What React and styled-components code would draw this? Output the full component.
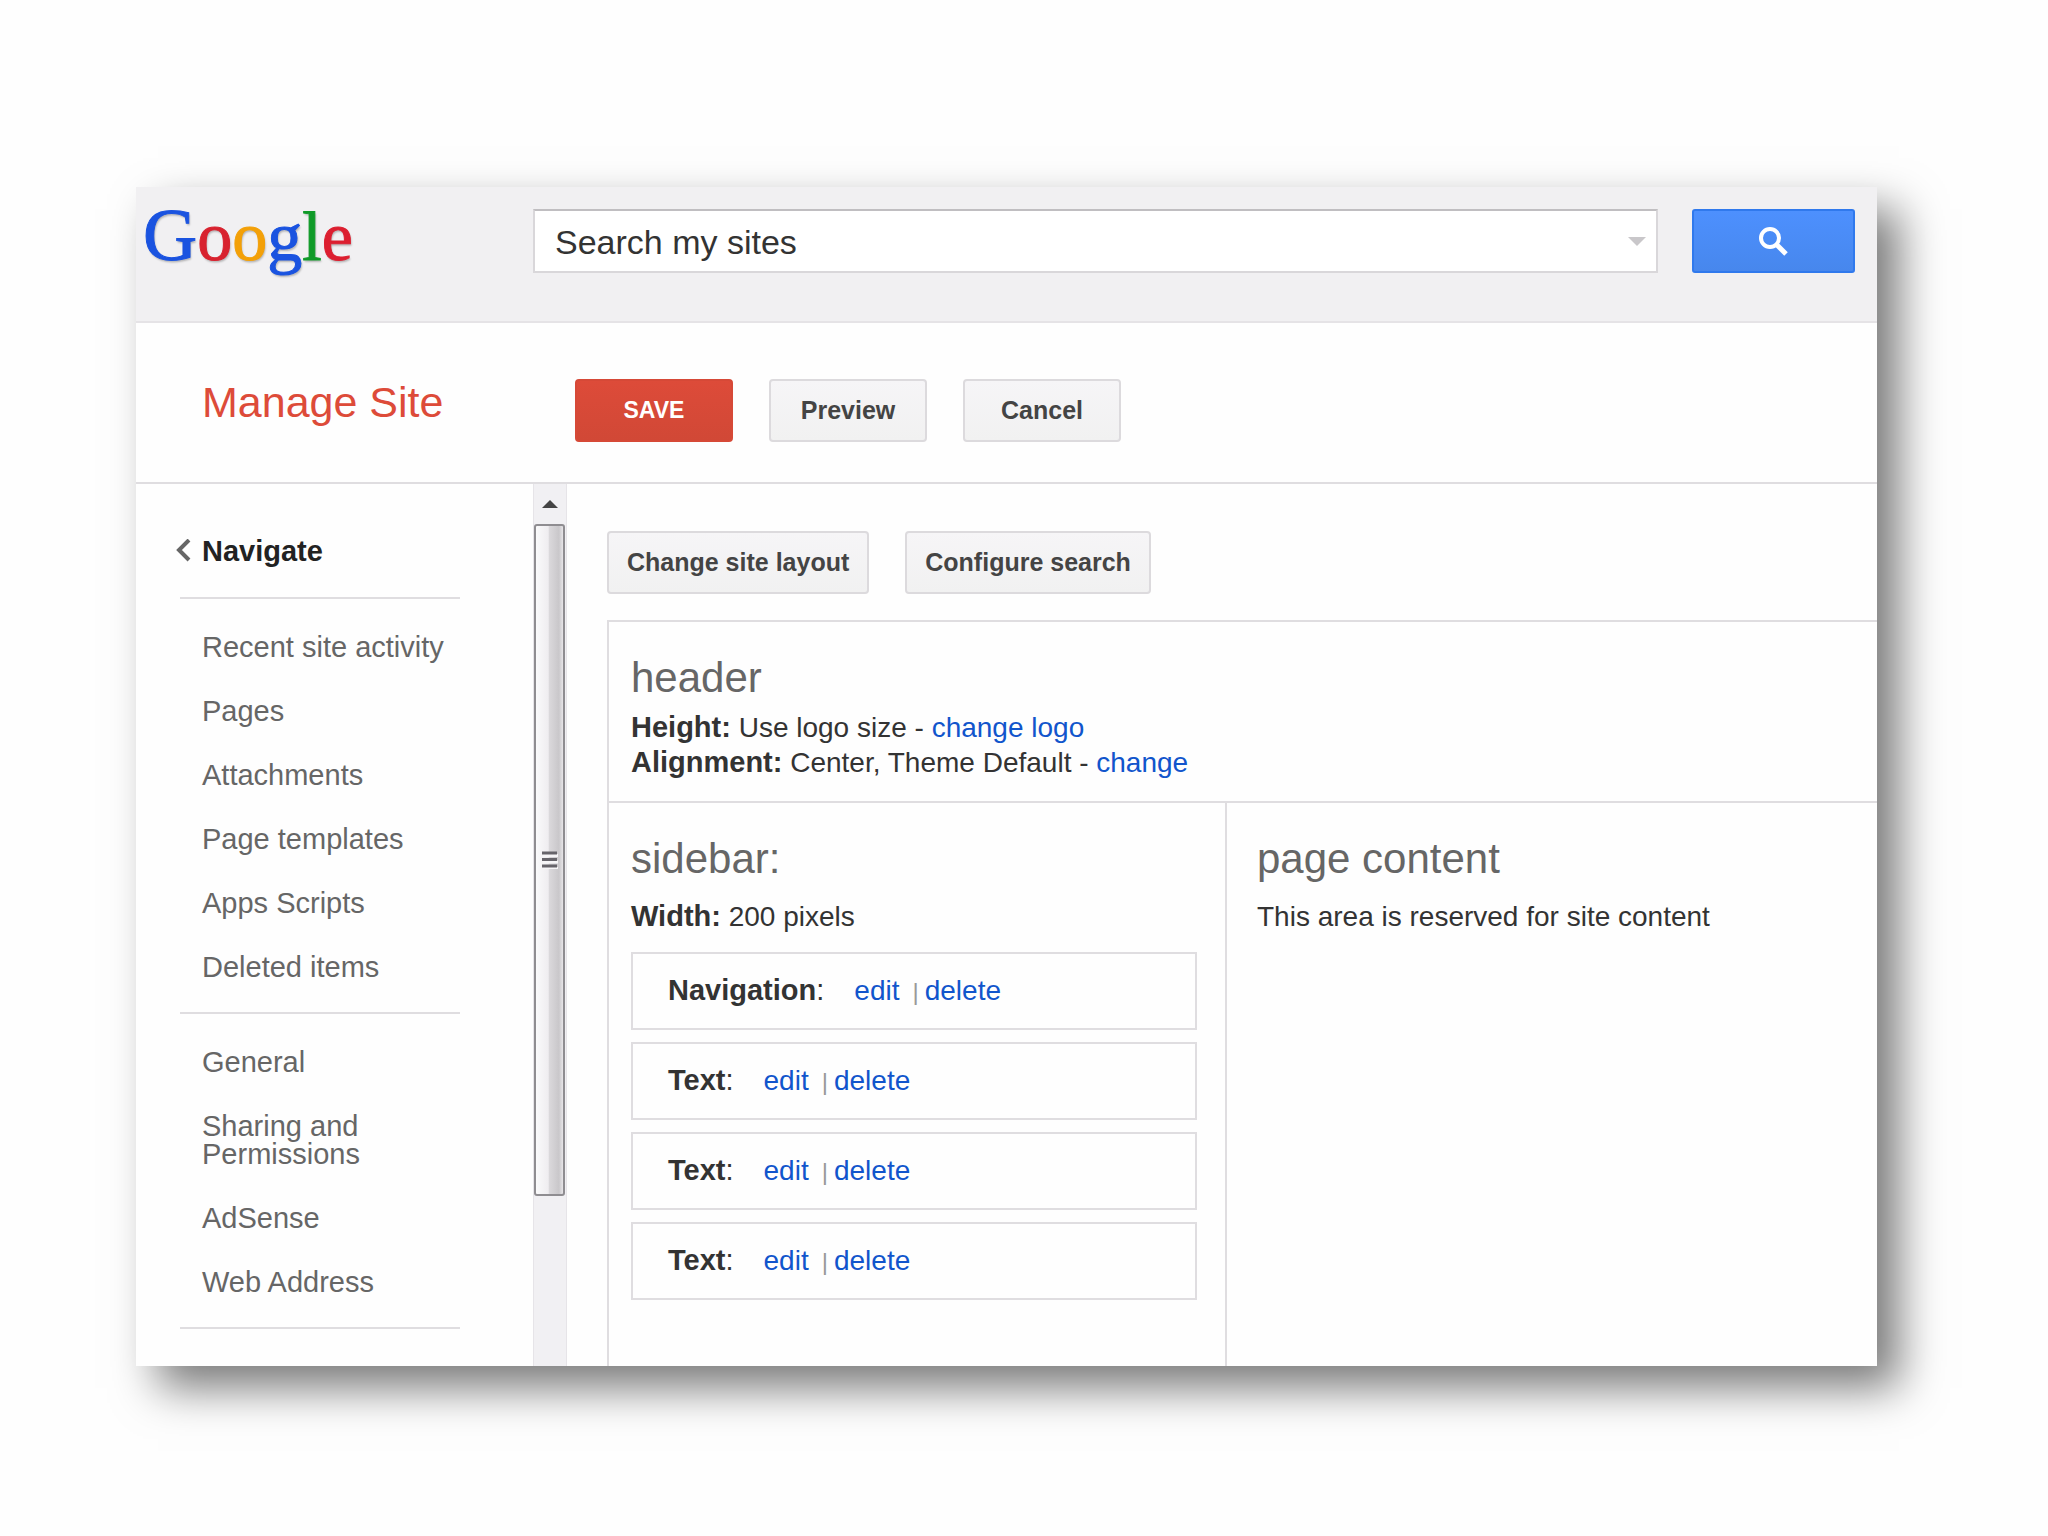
import React, { useState } from "react";
import styled, { createGlobalStyle } from "styled-components";

const GlobalStyle = createGlobalStyle`
    * {
        box-sizing: border-box;
    }
    body {
        margin: 0;
        background-color: #fefefe;
        color: #333;
        font-family: "Liberation Sans", Arial, sans-serif;
        font-size: 28px;
        line-height: 35px;
    }
    h1, h2, h3, p, ul {
        margin: 0;
        padding: 0;
        font-weight: normal;
    }
    ul {
        list-style: none;
    }
    button, input {
        font-family: inherit;
    }
`;

const Page = styled.div`
    min-height: 100vh;
    display: flex;
    padding: 187px 171px 170px 136px;
`;

const Window = styled.div`
    flex: 1;
    min-width: 0;
    display: flex;
    flex-direction: column;
    background-color: #fefefe;
    box-shadow: 22px 22px 42px rgba(0, 0, 0, 0.52);
`;

const TopBar = styled.header`
    display: flex;
    align-items: flex-start;
    height: 136px;
    padding: 22px 22px 0 0;
    background-color: #f1f0f2;
    border-bottom: 2px solid #e5e3e6;
`;

const Logo = styled.a`
    flex: 0 0 397px;
    padding-left: 7px;
    font-family: "Liberation Serif", "Times New Roman", serif;
    font-size: 70px;
    line-height: 52px;
    text-decoration: none;
    text-shadow: 1px 2px 2px rgba(0, 0, 0, 0.25);
`;

const Letter = styled.span`
    color: ${(props) => props.$color};
    -webkit-text-stroke: 1px ${(props) => props.$color};

    &:first-child {
        font-size: 75px;
    }
`;

const SearchForm = styled.form`
    flex: 1;
    display: flex;
    gap: 34px;
`;

const SearchBox = styled.div`
    flex: 1;
    display: flex;
    height: 64px;
    background-color: #fff;
    border: 2px solid #d9d7da;
    border-top-color: #c0bec1;
`;

const SearchInput = styled.input`
    flex: 1;
    min-width: 0;
    padding: 3px 0 0 20px;
    border: none;
    outline: none;
    background: transparent;
    color: #333;
    font-size: 34px;
`;

const SearchOptions = styled.button`
    display: flex;
    align-items: center;
    padding: 0 10px;
    border: none;
    background: transparent;
    cursor: pointer;
`;

const SearchButton = styled.button`
    display: flex;
    align-items: center;
    justify-content: center;
    width: 163px;
    height: 64px;
    padding: 0;
    border: 2px solid #3079ed;
    border-radius: 3px;
    background: linear-gradient(#4d90fe, #4787ed);
    cursor: pointer;
`;

const TitleBar = styled.div`
    display: flex;
    align-items: flex-start;
    height: 161px;
    padding-top: 56px;
    border-bottom: 2px solid #dfdde0;
`;

const Title = styled.h1`
    flex: 0 0 439px;
    padding-left: 66px;
    color: #dd4b39;
    font-size: 43px;
    line-height: 46px;
`;

const ButtonRow = styled.div`
    display: flex;
    gap: 36px;
`;

const Button = styled.button`
    min-width: 158px;
    height: 63px;
    padding: 0 18px 1px;
    border: 2px solid ${(props) => (props.$primary ? "#d64937" : "#dcdadd")};
    border-radius: 4px;
    background: ${(props) =>
        props.$primary
            ? "linear-gradient(#dd4b39, #d14836)"
            : "linear-gradient(#f6f5f7, #f1f1f1)"};
    color: ${(props) => (props.$primary ? "#fff" : "#444")};
    font-size: ${(props) => (props.$primary ? "23px" : "25px")};
    font-weight: bold;
    cursor: pointer;
`;

const Body = styled.div`
    flex: 1;
    display: flex;
`;

const Nav = styled.nav`
    flex: 0 0 397px;
    padding: 53px 73px 0 44px;
    font-size: 29px;
    line-height: 28px;
`;

const NavHeading = styled.h2`
    display: flex;
    align-items: center;
    gap: 11px;
    margin-left: -5px;
    padding-bottom: 32px;
    color: #222;
    font-size: 29px;
    font-weight: bold;
    line-height: 28px;
`;

const NavGroup = styled.ul`
    display: flex;
    flex-direction: column;
    gap: 36px;
    padding: 34px 0 31px 22px;
    border-top: 2px solid #dfdde0;

    &:last-child {
        border-bottom: 2px solid #dfdde0;
    }
`;

const NavLink = styled.a`
    display: block;
    color: #666;
    text-decoration: none;
`;

const ScrollTrack = styled.div`
    flex: 0 0 34px;
    padding-right: 1px;
    background-color: #f1f0f3;
    border-left: 1px solid #e6e4e8;
    border-right: 1px solid #e6e4e8;
`;

const ScrollArrow = styled.button`
    display: flex;
    align-items: center;
    justify-content: center;
    width: 100%;
    height: 40px;
    padding: 0;
    border: none;
    background: transparent;
`;

const ScrollThumb = styled.div`
    display: flex;
    align-items: center;
    justify-content: center;
    height: 672px;
    border: 2px solid #8f8d91;
    border-radius: 3px;
    background: linear-gradient(
        to right,
        #fafafb 0%,
        #efedf0 45%,
        #dad8db 50%,
        #c9c7ca 85%,
        #e8e6e9 100%
    );
`;

const Main = styled.main`
    flex: 1;
    min-width: 0;
    display: flex;
    flex-direction: column;
    gap: 26px;
    padding: 47px 0 0 40px;
`;

const Layout = styled.div`
    flex: 1;
    display: flex;
    flex-direction: column;
    border-top: 2px solid #dfdde0;
    border-left: 2px solid #dfdde0;
`;

const HeaderArea = styled.section`
    padding: 33px 22px 21px;
    border-bottom: 2px solid #dfdde0;
`;

const Columns = styled.div`
    flex: 1;
    display: flex;
`;

const SidebarArea = styled.section`
    flex: 0 0 618px;
    padding: 33px 28px 40px 22px;
    border-right: 2px solid #dfdde0;
`;

const ContentArea = styled.section`
    flex: 1;
    padding: 33px 30px;
`;

const AreaTitle = styled.h3`
    margin-bottom: ${(props) => (props.$tight ? "9px" : "17px")};
    color: #666;
    font-size: 42px;
    line-height: 46px;
`;

const Label = styled.b`
    font-size: 29px;
    line-height: 28px;
`;

const Link = styled.a`
    color: #1155cc;
    text-decoration: none;
`;

const GadgetList = styled.ul`
    display: flex;
    flex-direction: column;
    gap: 12px;
    margin-top: 18px;
`;

const Gadget = styled.li`
    display: flex;
    align-items: baseline;
    height: 78px;
    padding-left: 35px;
    border: 2px solid #dfdde0;
    line-height: 72px;
`;

const GadgetName = styled.span`
    margin-right: 30px;
    font-size: 29px;
`;

const Separator = styled.span`
    margin: 0 6px 0 13px;
    color: #999;
    font-size: 24px;
    line-height: 28px;
`;

const logoLetters = [
    ["G", "#1a53e0"],
    ["o", "#d8222f"],
    ["o", "#f3a008"],
    ["g", "#1a53e0"],
    ["l", "#0f9a28"],
    ["e", "#dc1f30"],
];

const navGroups = [
    [
        "Recent site activity",
        "Pages",
        "Attachments",
        "Page templates",
        "Apps Scripts",
        "Deleted items",
    ],
    ["General", "Sharing and Permissions", "AdSense", "Web Address"],
];

const gadgets = ["Navigation", "Text", "Text", "Text"];

const SearchIcon = () => (
    <svg width="30" height="30" viewBox="0 0 30 30" fill="none" stroke="#fff">
        <circle cx="11" cy="12" r="9" strokeWidth="4" />
        <path d="M18 19L27 28" strokeWidth="5" />
    </svg>
);

const App = () => {
    const [query, setQuery] = useState("Search my sites");

    return (
        <Page>
            <GlobalStyle />
            <Window>
                <TopBar>
                    <Logo href="#home">
                        {logoLetters.map(([letter, color], index) => (
                            <Letter key={index} $color={color}>
                                {letter}
                            </Letter>
                        ))}
                    </Logo>
                    <SearchForm onSubmit={(e) => e.preventDefault()}>
                        <SearchBox>
                            <SearchInput
                                type="text"
                                aria-label="Search my sites"
                                value={query}
                                onChange={(e) => setQuery(e.target.value)}
                            />
                            <SearchOptions
                                type="button"
                                aria-label="Search options"
                            >
                                <svg width="18" height="9" viewBox="0 0 18 9">
                                    <path d="M0 0H18L9 9Z" fill="#c9c7ca" />
                                </svg>
                            </SearchOptions>
                        </SearchBox>
                        <SearchButton type="submit" aria-label="Search">
                            <SearchIcon />
                        </SearchButton>
                    </SearchForm>
                </TopBar>

                <TitleBar>
                    <Title>Manage Site</Title>
                    <ButtonRow>
                        <Button type="button" $primary>
                            SAVE
                        </Button>
                        <Button type="button">Preview</Button>
                        <Button type="button">Cancel</Button>
                    </ButtonRow>
                </TitleBar>

                <Body>
                    <Nav>
                        <NavHeading>
                            <svg
                                width="16"
                                height="24"
                                viewBox="0 0 16 24"
                                fill="none"
                                stroke="#666"
                                strokeWidth="4"
                            >
                                <path d="M14 1L4 11L14 21" />
                            </svg>
                            Navigate
                        </NavHeading>
                        {navGroups.map((links, index) => (
                            <NavGroup key={index}>
                                {links.map((link) => (
                                    <li key={link}>
                                        <NavLink href="#nav">{link}</NavLink>
                                    </li>
                                ))}
                            </NavGroup>
                        ))}
                    </Nav>

                    <ScrollTrack>
                        <ScrollArrow type="button" aria-label="Scroll up">
                            <svg width="16" height="8" viewBox="0 0 16 8">
                                <path d="M8 0L16 8H0Z" fill="#444" />
                            </svg>
                        </ScrollArrow>
                        <ScrollThumb>
                            <svg
                                width="16"
                                height="18"
                                viewBox="0 0 16 18"
                                strokeWidth="3"
                            >
                                <path
                                    d="M1 4.5H16M1 11H16M1 17.5H16"
                                    stroke="#f6f5f7"
                                />
                                <path
                                    d="M0 2H15M0 8.5H15M0 15H15"
                                    stroke="#66646a"
                                />
                            </svg>
                        </ScrollThumb>
                    </ScrollTrack>

                    <Main>
                        <ButtonRow>
                            <Button type="button">Change site layout</Button>
                            <Button type="button">Configure search</Button>
                        </ButtonRow>
                        <Layout>
                            <HeaderArea>
                                <AreaTitle $tight>header</AreaTitle>
                                <p>
                                    <Label>Height:</Label> Use logo size -{" "}
                                    <Link href="#logo">change logo</Link>
                                </p>
                                <p>
                                    <Label>Alignment:</Label> Center, Theme
                                    Default -{" "}
                                    <Link href="#alignment">change</Link>
                                </p>
                            </HeaderArea>
                            <Columns>
                                <SidebarArea>
                                    <AreaTitle>sidebar:</AreaTitle>
                                    <p>
                                        <Label>Width:</Label> 200 pixels
                                    </p>
                                    <GadgetList>
                                        {gadgets.map((name, index) => (
                                            <Gadget key={index}>
                                                <GadgetName>
                                                    <b>{name}</b>:
                                                </GadgetName>
                                                <Link href="#edit">edit</Link>
                                                <Separator>|</Separator>
                                                <Link href="#delete">
                                                    delete
                                                </Link>
                                            </Gadget>
                                        ))}
                                    </GadgetList>
                                </SidebarArea>
                                <ContentArea>
                                    <AreaTitle>page content</AreaTitle>
                                    <p>
                                        This area is reserved for site content
                                    </p>
                                </ContentArea>
                            </Columns>
                        </Layout>
                    </Main>
                </Body>
            </Window>
        </Page>
    );
};

export default App;
